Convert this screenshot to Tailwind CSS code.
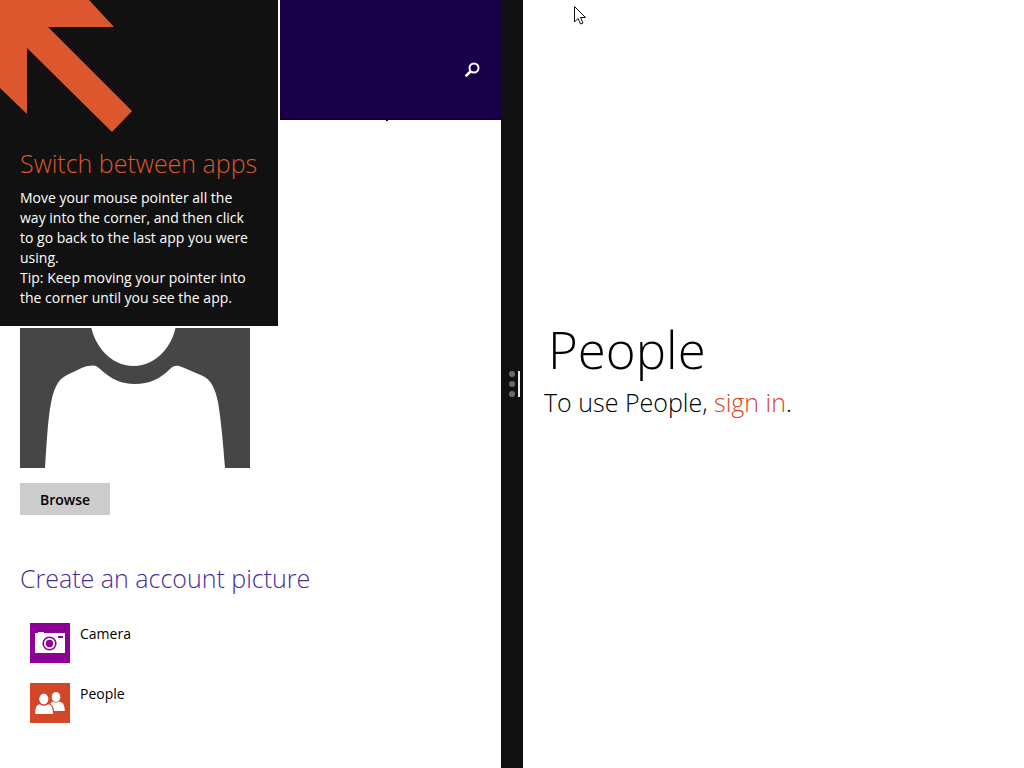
<!DOCTYPE html>
<html lang="en">
<head>
    <meta charset="UTF-8">
    <meta name="viewport" content="width=device-width, initial-scale=1.0">
    <title>Account picture</title>
    <script src="https://cdn.jsdelivr.net/npm/@tailwindcss/browser@4"></script>
</head>
<body class="bg-white text-black font-['Open_Sans','Noto_Sans',sans-serif]">

    <div class="relative grid grid-cols-[1fr_22px_1fr] min-h-screen overflow-hidden">

        <!-- Left app: account picture settings -->
        <main class="flex flex-col">
            <header class="h-[120px] bg-[#180048] border-b border-[#0c0028] flex items-center justify-end pt-5 pr-[21px]">
                <button type="button" aria-label="Search" class="w-4 h-4">
                    <svg viewBox="0 0 16 16" class="w-4 h-4" fill="none" stroke="#fff">
                        <circle cx="10" cy="6" r="4.5" stroke-width="2"/>
                        <path d="M7 9 L1.6 14.2" stroke-width="2.6"/>
                    </svg>
                </button>
            </header>
            <div class="ml-[386px] h-[1px] w-[2px] bg-black"></div>

            <section class="px-5 pt-[117px]">
                <!-- Default user tile -->
                <svg viewBox="0 0 230 230" class="w-[230px] h-[230px]" role="img" aria-label="Account picture">
                    <rect width="230" height="230" fill="#464646"/>
                    <ellipse cx="113.500" cy="75" rx="44" ry="53" fill="#fff"/>
                    <path d="M25 230 C27 200 28 178 32 160 C35 148 39 141 47 137 C56 133 62 129 68 128 C74 127 76 127 80 131 C91 141 101 146 115 146 C129 146 140 141 150 131 C154 127 157 127 162 129 C169 132 176 135 183 138 C191 142 195 150 198 164 C201 182 203 204 205 230 Z" fill="#fff"/>
                </svg>
                <button type="button" class="mt-[15px] flex h-8 w-[90px] items-center justify-center bg-[#cccccc] text-[14px] font-semibold">Browse</button>

                <h2 class="mt-[45px] text-[25px] leading-[36px] font-light text-[#4a2c9c] whitespace-nowrap">Create an account picture</h2>

                <ul class="mt-[27px] ml-[10px] flex flex-col gap-5">
                    <li>
                        <a href="#" class="flex gap-[10px]">
                            <svg viewBox="0 0 40 40" class="w-10 h-10">
                                <rect width="40" height="40" fill="#8c0095"/>
                                <path d="M5 10 H8 V9 H14 V10 H35 V30 H5 Z" fill="#fff"/>
                                <circle cx="19.500" cy="20.500" r="6.300" fill="none" stroke="#8c0095" stroke-width="1.600"/>
                                <circle cx="19.500" cy="20.500" r="3.700" fill="#8c0095"/>
                                <rect x="28" y="13" width="5" height="2" fill="#8c0095"/>
                            </svg>
                            <span class="text-[14px] leading-[22px]">Camera</span>
                        </a>
                    </li>
                    <li>
                        <a href="#" class="flex gap-[10px]">
                            <svg viewBox="0 0 40 40" class="w-10 h-10">
                                <rect width="40" height="40" fill="#d24726"/>
                                <g fill="#fff">
                                    <ellipse cx="26" cy="14" rx="4.300" ry="5"/>
                                    <path d="M20 28 V22 C20 20 22 19 23 18.500 C25 20 27 20 29 18.500 C33 19.500 34.500 21 34.800 28 Z"/>
                                </g>
                                <g fill="#fff" stroke="#d24726" stroke-width="1.200">
                                    <path d="M4.500 31.500 C4.500 24 6 21.500 10 20.500 C12.500 22.500 15.500 22.500 18 20.500 C22 21.500 23.500 24 23.600 31.500 Z"/>
                                    <ellipse cx="13.800" cy="16" rx="5.200" ry="6"/>
                                </g>
                            </svg>
                            <span class="text-[14px] leading-[22px]">People</span>
                        </a>
                    </li>
                </ul>
            </section>
        </main>

        <!-- Split handle -->
        <div class="bg-[#111111] flex items-center justify-end gap-[3px] pr-[3px]">
            <div class="flex flex-col gap-1">
                <span class="size-[6px] rounded-full bg-[#6b6b6b]"></span>
                <span class="size-[6px] rounded-full bg-[#6b6b6b]"></span>
                <span class="size-[6px] rounded-full bg-[#6b6b6b]"></span>
            </div>
            <div class="h-[26px] w-[2px] bg-[#f0f0f0]"></div>
        </div>

        <!-- Right app: People -->
        <section class="flex flex-col justify-center pl-[21px] pb-[31px]">
            <h1 class="pl-1 text-[51px] leading-[64px] font-light">People</h1>
            <p class="mt-[3px] text-[25px] leading-[36px] font-light">To use People, <a href="#" class="text-[#d24726]">sign in</a>.</p>
        </section>

        <!-- Corner tip -->
        <aside class="absolute top-0 left-0 w-[280px] border-r-2 border-b-2 border-white bg-[#111111] text-white pb-[18px]">
            <svg viewBox="0 0 140 140" class="block w-[140px] h-[140px]">
                <path d="M0 0 H89 L114 27 H48 L132 111 L112 132 L27 48 V114 L0 88 Z" fill="#dc572e"/>
            </svg>
            <h2 class="mt-[5px] pl-5 text-[25px] leading-[36px] font-light text-[#dc572e] whitespace-nowrap">Switch between apps</h2>
            <p class="mt-[7px] pl-5 text-[14px] leading-5 whitespace-nowrap">Move your mouse pointer all the<br>way into the corner, and then click<br>to go back to the last app you were<br>using.<br>Tip: Keep moving your pointer into<br>the corner until you see the app.</p>
        </aside>

        <!-- Mouse pointer -->
        <svg viewBox="0 0 14 20" class="absolute top-[5px] left-[573px] w-[14px] h-5">
            <path d="M1.500 1.500 V17 L5 13.500 L7.500 19 L10 18 L7.500 12.500 H12.500 Z" fill="#fff" stroke="#111" stroke-width="1"/>
        </svg>
    </div>

</body>
</html>
